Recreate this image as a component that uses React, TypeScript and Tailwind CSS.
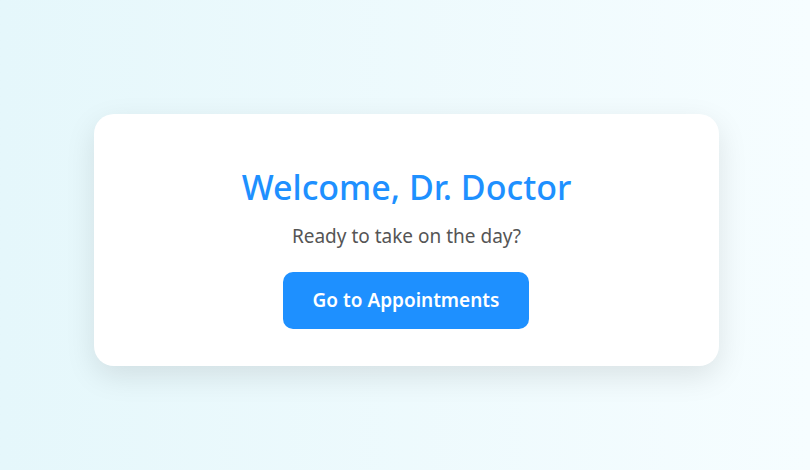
export default function App() {
  return (
    <div
      className="w-full h-[470px] flex justify-center pt-[114px] bg-gradient-to-r from-[#e5f7fb] to-[#f6fdff]"
      style={{ fontFamily: '"Noto Sans", "Open Sans", sans-serif' }}
    >
      <div className="w-[625px] h-[252px] ml-[3px] bg-white rounded-[20px] shadow-[0_10px_30px_rgba(0,0,0,0.1)] flex flex-col items-center pt-[50px]">
        <h1 className="text-[34px] leading-[46px] font-medium text-[#1e90ff]">Welcome, Dr. Doctor</h1>
        <p className="mt-[13px] text-[19px] leading-[26px] text-[#555555]">Ready to take on the day?</p>
        <button className="mt-[23px] -ml-[1px] w-[246px] h-[57px] rounded-[10px] bg-[#1e90ff] text-white text-[19px] font-semibold">
          Go to Appointments
        </button>
      </div>
    </div>
  );
}
